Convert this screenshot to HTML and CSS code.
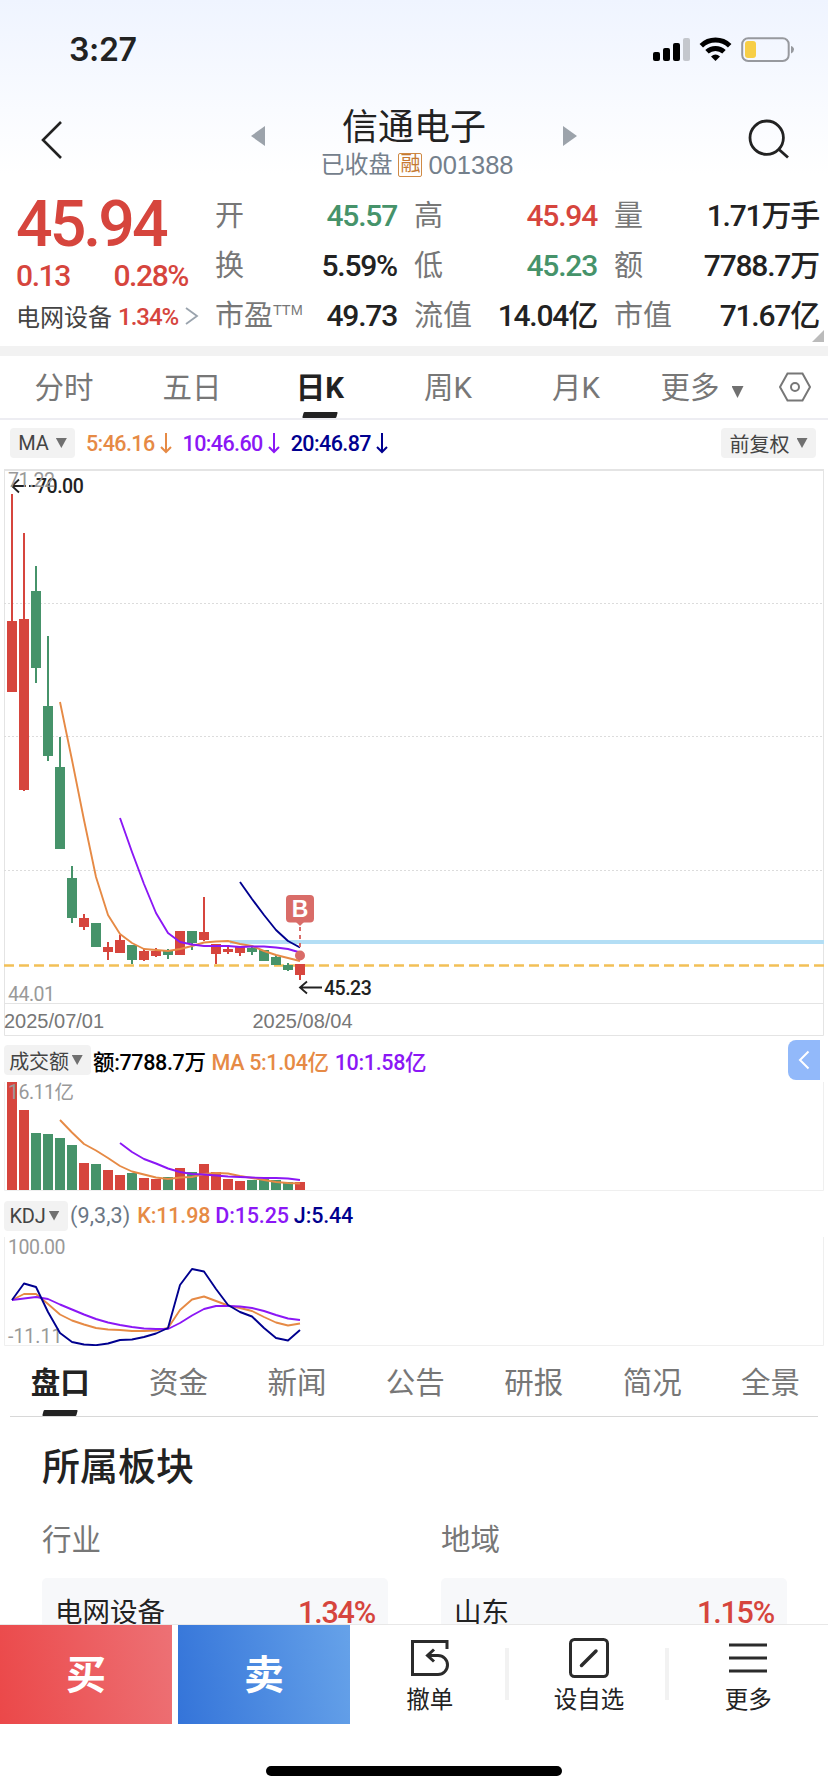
FILE: index.html
```html
<!DOCTYPE html>
<html lang="zh-CN">
<head>
    <meta charset="UTF-8">
    <meta name="viewport" content="width=device-width, initial-scale=1.0">
    <title>信通电子 001388</title>
    <link rel="stylesheet" href="styles.css">
</head>
<body>

<div class="page">
    <header class="top">
        <!-- Status bar -->
        <div class="status-bar">
            <span class="time">3:27</span>
            <svg class="status-icons" width="142" height="26" viewBox="0 0 142 26">
                <rect x="0" y="15" width="7" height="9" rx="2"/>
                <rect x="10" y="11" width="7" height="13" rx="2"/>
                <rect x="20" y="6" width="7" height="18" rx="2"/>
                <rect x="30" y="1" width="7" height="23" rx="2" fill="#c4c7cd"/>
                <g fill="none" stroke="#000" stroke-width="5">
                    <path d="M48.3 8.7 A20.5 20.5 0 0 1 76.7 8.7"/>
                    <path d="M54 14.8 A12.4 12.4 0 0 1 71 14.8"/>
                </g>
                <path d="M62.5 24 L58 19.6 Q62.500 15.600 67 19.600 Z"/>
                <rect x="89.200" y="1.200" width="46.500" height="22.800" rx="6" fill="none" stroke="#97999e" stroke-width="2"/>
                <rect x="92" y="4" width="11" height="17" rx="3" fill="#f7ce46"/>
                <path d="M138 9 Q141 10 141 12.500 Q141 15 138 16.500 Z" fill="#97999e"/>
            </svg>
        </div>

        <!-- Title -->
        <div class="nav">
            <svg class="back" width="22" height="40" viewBox="0 0 22 40"><path d="M20 2 L2 20 L20 38"/></svg>
            <span class="switch prev"></span>
            <div class="stock">
                <h1>信通电子</h1>
                <p><span>已收盘</span><i>融</i><span class="code">001388</span></p>
            </div>
            <span class="switch next"></span>
            <svg class="search" width="42" height="42" viewBox="0 0 42 42"><circle cx="18.700" cy="18.700" r="16.700"/><path d="M31 30.500 L40 38.500"/></svg>
        </div>
    </header>

    <!-- Quote -->
    <section class="quote">
        <div class="price">
            <div class="last">45.94</div>
            <div class="change"><span>0.13</span><span>0.28%</span></div>
            <div class="sector">电网设备<b>1.34%</b><svg width="14" height="20" viewBox="0 0 14 20"><path d="M1 2 L12 10 L1 18"/></svg></div>
        </div>
        <dl class="stats">
            <div><dt>开</dt><dd class="down">45.57</dd></div>
            <div><dt>高</dt><dd class="up">45.94</dd></div>
            <div><dt>量</dt><dd>1.71万手</dd></div>
            <div><dt>换</dt><dd>5.59%</dd></div>
            <div><dt>低</dt><dd class="down">45.23</dd></div>
            <div><dt>额</dt><dd>7788.7万</dd></div>
            <div><dt>市盈<sup>TTM</sup></dt><dd>49.73</dd></div>
            <div><dt>流值</dt><dd>14.04亿</dd></div>
            <div><dt>市值</dt><dd>71.67亿</dd></div>
        </dl>
        <span class="corner"></span>
    </section>

    <!-- Period tabs -->
    <nav class="periods">
        <a>分时</a>
        <a>五日</a>
        <a class="active">日K</a>
        <a>周K</a>
        <a>月K</a>
        <a class="more">更多<span class="caret"></span></a>
        <svg width="32" height="32" viewBox="0 0 32 32"><path d="M8.500 2.500 H23.500 L31 16 L23.500 29.500 H8.500 L1 16 Z"/><circle cx="16" cy="16" r="4"/></svg>
    </nav>

    <div class="ma-row">
        <span class="pill">MA<span class="caret"></span></span>
        <span class="ma5">5:46.16<svg class="arrow" viewBox="0 0 12 22"><path d="M6 1 V20 M1 15 L6 20 L11 15"/></svg></span>
        <span class="ma10">10:46.60<svg class="arrow" viewBox="0 0 12 22"><path d="M6 1 V20 M1 15 L6 20 L11 15"/></svg></span>
        <span class="ma20">20:46.87<svg class="arrow" viewBox="0 0 12 22"><path d="M6 1 V20 M1 15 L6 20 L11 15"/></svg></span>
        <span class="pill adjust">前复权<span class="caret"></span></span>
    </div>

    <!-- Candles -->
    <svg class="chart" width="828" height="568" viewBox="0 468 828 568">
        <g class="frame">
            <path d="M4 470 H824" stroke-width="2"/>
            <path d="M4.500 470 V1035.500 H823.500 V470 M4 1003.500 H824"/>
        </g>
        <path class="grid" d="M4 603.500 H824 M4 736.500 H824 M4 870.500 H824"/>
        <path d="M230 942 H824" stroke="#b3def5" stroke-width="4"/>
        <path d="M4 965.500 H824" stroke="#f2c057" stroke-width="2.500" stroke-dasharray="10 5"/>
        <g id="candles"></g>
        <g id="priceLines"></g>
        <g class="marker">
            <path class="marker-line" d="M300 927 V950"/>
            <path d="M296 922 H304 L300 926 Z"/>
            <rect x="286" y="895" width="28" height="27.500" rx="4"/>
            <circle cx="300" cy="955.500" r="5"/>
            <text x="300" y="917" text-anchor="middle">B</text>
        </g>
        <g class="pointer">
            <path d="M12 486 H26 M29 486 H36 M19 479.500 L12 486 L19 492.500"/>
            <path d="M300 987.500 H322 M307 981.500 L300 987.500 L307 993.500"/>
        </g>
        <text class="label dark" x="36" y="493">70.00</text>
        <text class="label" x="8" y="487">71.22</text>
        <text class="label dark" x="324" y="995">45.23</text>
        <text class="label" x="8" y="1001">44.01</text>
        <text class="date" x="4" y="1028">2025/07/01</text>
        <text class="date" x="252.500" y="1028">2025/08/04</text>
    </svg>

    <!-- Turnover -->
    <div class="ind-row volume-row">
        <span class="pill">成交额<span class="caret"></span></span>
        <span class="black">额:7788.7万</span>
        <span class="ma5">MA 5:1.04亿</span>
        <span class="ma10">10:1.58亿</span>
        <span class="drawer"><svg width="12" height="20" viewBox="0 0 12 20"><path d="M10.500 1.500 L2 10 L10.500 18.500"/></svg></span>
    </div>
    <svg class="chart" width="828" height="110" viewBox="0 1081 828 110">
        <path class="frame light" d="M4.500 1082 V1190.500 H823.500 V1082"/>
        <g id="volumes"></g>
        <g id="volumeLines"></g>
        <text class="label" x="8" y="1099">16.11亿</text>
    </svg>

    <!-- KDJ -->
    <div class="ind-row kdj-row">
        <span class="pill">KDJ<span class="caret"></span></span>
        <span class="params">(9,3,3)</span>
        <span class="ma5">K:11.98</span>
        <span class="ma10">D:15.25</span>
        <span class="ma20">J:5.44</span>
    </div>
    <svg class="chart" width="828" height="110" viewBox="0 1236 828 110">
        <path class="frame light" d="M4.500 1237 V1345.500 H823.500 V1237"/>
        <text class="label" x="8" y="1254">100.00</text>
        <text class="label low" x="8" y="1342.500">-11.11</text>
        <g id="kdjLines"></g>
    </svg>

    <!-- Detail tabs -->
    <nav class="details">
        <a class="active">盘口</a>
        <a>资金</a>
        <a>新闻</a>
        <a>公告</a>
        <a>研报</a>
        <a>简况</a>
        <a>全景</a>
    </nav>

    <section class="boards">
        <h2>所属板块</h2>
        <div class="board-grid">
            <div>
                <h3>行业</h3>
                <div class="card"><span>电网设备</span><b>1.34%</b></div>
            </div>
            <div>
                <h3>地域</h3>
                <div class="card"><span>山东</span><b>1.15%</b></div>
            </div>
        </div>
    </section>

    <!-- Trade bar -->
    <footer class="trade">
        <div class="trade-row">
            <button class="buy">买</button>
            <button class="sell">卖</button>
            <div class="action">
                <svg width="42" height="42" viewBox="0 0 42 42"><path d="M38 12 V4.500 H3.500 V37.500 H29 A9 9 0 0 0 29 18.500 H19 M25 12.500 L18.500 18.500 L25 24.500"/></svg>
                <span>撤单</span>
            </div>
            <div class="action">
                <svg width="42" height="42" viewBox="0 0 42 42"><rect x="2.500" y="2.500" width="37" height="37" rx="4"/><path class="pen" d="M13.500 28.500 L28 14"/></svg>
                <span>设自选</span>
            </div>
            <div class="action">
                <svg width="42" height="42" viewBox="0 0 42 42"><path d="M2 8 H40 M2 21 H40 M2 34 H40"/></svg>
                <span>更多</span>
            </div>
        </div>
        <div class="home"></div>
    </footer>
</div>

<script>
    const UP = '#d6453d';
    const DOWN = '#46936a';
    const ORANGE = '#e68a45';
    const PURPLE = '#8b17f5';
    const NAVY = '#00008f';

    // [up, wick top, body top, body bottom, wick bottom, volume top]
    const days = [
        [1, 494, 621, 692, 692, 1082],
        [1, 533, 619, 790, 791, 1110],
        [0, 566, 591, 668, 683, 1133],
        [0, 636, 706, 756, 761, 1134],
        [0, 737, 767, 849, 849, 1138],
        [0, 866, 878, 918, 923, 1145],
        [1, 914, 918, 927, 930, 1163],
        [0, 923, 923, 947, 947, 1164],
        [1, 942, 947, 952, 960, 1170],
        [1, 935, 940, 953, 953, 1175],
        [0, 945, 945, 960, 964, 1173],
        [1, 949, 951, 960, 961, 1178],
        [1, 948, 951, 956, 957, 1179],
        [0, 949, 951, 955, 959, 1177],
        [1, 931, 931, 955, 955, 1168],
        [0, 931, 931, 943, 950, 1172],
        [1, 897, 932, 940, 941, 1164],
        [1, 944, 944, 954, 964, 1172],
        [1, 945, 949, 952, 954, 1179],
        [1, 947, 947, 953, 956, 1181],
        [0, 946, 948, 952, 955, 1180],
        [0, 950, 950, 961, 961, 1179],
        [0, 955, 957, 965, 965, 1180],
        [0, 963, 965, 970, 971, 1182],
        [1, 964, 964, 975, 980, 1182]
    ];

    function rect(x, y, w, h, color) {
        return `<rect x="${x}" y="${y}" width="${w}" height="${h}" fill="${color}"/>`;
    }

    // Every series ends on the last day, start is the index of its first day
    function line(start, values, color) {
        const points = values.map((y, i) => `${12 + (start + i) * 12},${y}`).join(' ');
        return `<polyline points="${points}" fill="none" stroke="${color}" stroke-width="1.9" stroke-linejoin="round"/>`;
    }

    let candles = '';
    let volumes = '';
    days.forEach(([up, high, top, bottom, low, vol], i) => {
        const color = up ? UP : DOWN;
        const x = 12 + i * 12;
        candles += rect(x - 1, high, 2, low - high, color) + rect(x - 5, top, 10, bottom - top, color);
        volumes += rect(x - 5, vol, 10, 1190 - vol, color);
    });
    document.getElementById('candles').innerHTML = candles;
    document.getElementById('volumes').innerHTML = volumes;

    document.getElementById('priceLines').innerHTML =
        line(4, [702, 760, 820, 877, 915, 934, 943, 949, 950, 951, 949, 946, 942.5, 941.5, 941, 944, 946, 951, 955, 958, 961], ORANGE) +
        line(9, [818, 852, 884, 913, 933, 942, 944.5, 946, 946, 946, 947, 946.5, 946.5, 947.5, 949, 952.5], PURPLE) +
        line(19, [882, 899, 915, 930, 941, 947.5], NAVY);

    document.getElementById('volumeLines').innerHTML =
        line(4, [1120, 1132.5, 1144, 1150.5, 1158, 1166, 1171.5, 1174.5, 1177.5, 1179, 1177.5, 1177, 1174, 1173, 1173.5, 1176, 1178, 1180, 1182, 1183, 1183.5], ORANGE) +
        line(9, [1143, 1152, 1159, 1163.5, 1168.5, 1172, 1174, 1174.5, 1175.5, 1176.5, 1177, 1177.5, 1178, 1178, 1178.5, 1180], PURPLE);

    document.getElementById('kdjLines').innerHTML =
        line(0, [1300, 1294, 1294, 1304, 1314.5, 1320.5, 1324.5, 1328, 1329.5, 1330, 1331, 1331, 1330.5, 1328, 1310, 1299.5, 1296.5, 1301, 1305.5, 1308, 1311, 1317, 1322.5, 1325.5, 1323.5], ORANGE) +
        line(0, [1300, 1298.5, 1297, 1299, 1304.5, 1309.5, 1314.5, 1319, 1322.5, 1325, 1327, 1328.5, 1329, 1329, 1323, 1315.5, 1309, 1306, 1306, 1306.5, 1308, 1311, 1315, 1318.5, 1320], PURPLE) +
        line(0, [1300, 1283.5, 1287, 1312, 1333, 1342, 1344.5, 1345.2, 1343.5, 1340, 1339.5, 1337, 1333.5, 1328, 1285, 1269, 1271.5, 1289, 1305, 1312, 1316.5, 1328, 1338, 1340.5, 1330], NAVY);
</script>

</body>
</html>
```
FILE: styles.css
```css
* {
    box-sizing: border-box;
}

body {
    margin: 0;
    background: #fff;
    color: #222;
    font-family: Roboto, "Noto Sans CJK SC", sans-serif;
}

h1, h2, h3, p, dl, dd {
    margin: 0;
    font-weight: 400;
}

svg {
    display: block;
    flex: none;
}

.page {
    display: flex;
    flex-direction: column;
    width: 828px;
    height: 1792px;
    overflow: hidden;
}

.page > * {
    flex: none;
}

.top {
    height: 190px;
    background: linear-gradient(#eff4ff, #fff 92%);
}

.status-bar {
    display: flex;
    justify-content: space-between;
    align-items: center;
    height: 100px;
    padding: 0 33px 0 69px;
}

.time {
    font: 600 32px/40px Inter, sans-serif;
    letter-spacing: -0.3px;
}

.nav {
    display: flex;
    height: 90px;
    padding: 0 38px 0 41px;
}

.back {
    margin-top: 20px;
    fill: none;
    stroke: #222;
    stroke-width: 2.6;
}

.switch {
    width: 14px;
    height: 20px;
    margin-top: 26px;
    background: #9ca3ab;
}

.prev {
    margin-left: 188px;
    clip-path: polygon(0 50%, 100% 0, 100% 100%);
}

.next {
    clip-path: polygon(0 0, 100% 50%, 0 100%);
}

.stock {
    width: 298px;
    text-align: center;
}

.stock h1 {
    padding-top: 7px;
    font-size: 36px;
    line-height: 42px;
}

.stock p {
    display: flex;
    justify-content: center;
    align-items: center;
    height: 32px;
    padding-left: 6px;
    color: #74808c;
    font-size: 24px;
    line-height: 32px;
}

.stock i {
    width: 24px;
    height: 24px;
    margin: 0 6px;
    border: 1.5px solid #d08a45;
    border-radius: 2px;
    color: #c57a32;
    font-size: 20px;
    font-style: normal;
    line-height: 21px;
}

.code {
    font-family: "Liberation Sans", Arial, sans-serif;
    font-size: 25.5px;
}

.search {
    margin-top: 19px;
    margin-left: auto;
    fill: none;
    stroke: #222;
    stroke-width: 2.8;
}

.quote {
    position: relative;
    display: flex;
    height: 166px;
    border-bottom: 10px solid #f2f2f2;
}

.price {
    width: 215px;
    padding-left: 16px;
    color: #d6453d;
    font-weight: 500;
}

.last {
    height: 64px;
    font-size: 64.5px;
    line-height: 68px;
    letter-spacing: -3px;
}

.change {
    display: flex;
    justify-content: space-between;
    width: 172px;
    font-size: 30px;
    line-height: 44px;
    letter-spacing: -1.4px;
}

.sector {
    display: flex;
    align-items: center;
    height: 35px;
    color: #444;
    font-size: 24px;
    font-weight: 400;
    white-space: nowrap;
}

.sector b {
    margin: 2px 7px 0 6px;
    color: #d6453d;
    font-weight: 500;
    letter-spacing: -1px;
}

.sector svg {
    fill: none;
    stroke: #9aa3ad;
    stroke-width: 1.8;
}

.stats {
    display: grid;
    grid-template-columns: 182px 183px 205px;
    grid-template-rows: repeat(3, 50px);
    column-gap: 17px;
}

.stats > div {
    display: flex;
    justify-content: space-between;
    align-items: center;
    height: 52px;
    white-space: nowrap;
}

.stats dt {
    color: #777;
    font-size: 29px;
    line-height: 50px;
}

.stats sup {
    position: relative;
    top: -11px;
    font: 14.5px/1 "Liberation Sans", sans-serif;
    vertical-align: baseline;
}

.stats dd {
    font-size: 30px;
    font-weight: 500;
    line-height: 50px;
    letter-spacing: -1.2px;
}

.up {
    color: #d6453d;
}

.down {
    color: #46936a;
}

.corner {
    position: absolute;
    right: 4px;
    bottom: 4px;
    width: 12px;
    height: 12px;
    background: #bbb;
    clip-path: polygon(100% 0, 100% 100%, 0 100%);
}

.periods {
    display: grid;
    grid-template-columns: 128px 128px 128px 128px 128px 139px 32px;
    align-items: center;
    height: 64px;
    border-bottom: 2px solid #ededf2;
    color: #777;
    font-size: 29.5px;
    text-align: center;
}

.periods a,
.details a {
    position: relative;
    height: 62px;
    line-height: 65px;
}

.periods .active,
.details .active {
    color: #222;
    font-weight: 700;
}

.periods .active::after,
.details .active::after {
    content: "";
    position: absolute;
    bottom: 0;
    left: 50%;
    width: 34px;
    height: 6px;
    margin-left: -17px;
    border-radius: 1px;
    background: #222;
    transform: skewX(-15deg);
}

.periods svg {
    fill: none;
    stroke: #777;
    stroke-width: 2;
}

.caret {
    display: inline-block;
    width: 11px;
    height: 10px;
    background: #707070;
    clip-path: polygon(0 0, 100% 0, 50% 100%);
}

.periods .more {
    padding-right: 15px;
}

.more .caret {
    width: 12px;
    height: 12px;
    margin-left: 12px;
}

.ma-row,
.ind-row {
    position: relative;
    display: flex;
    align-items: center;
    font-size: 21.5px;
    font-weight: 500;
    white-space: nowrap;
}

.ma-row {
    height: 48px;
    padding: 0 12px 2px 10px;
}

.ma-row > span {
    display: flex;
    align-items: center;
    margin-right: 11px;
    letter-spacing: -0.6px;
}

.pill {
    display: flex;
    align-items: center;
    justify-content: center;
    height: 30px;
    border-radius: 4px;
    background: #f2f2f2;
    color: #444;
    font-size: 20px;
    font-weight: 400;
}

.ma-row .pill {
    width: 65px;
    gap: 7px;
    letter-spacing: 0;
}

.ma-row .adjust {
    width: 95px;
    margin: 0 0 0 auto;
}

.arrow {
    width: 12px;
    height: 22px;
    margin-left: 5px;
    fill: none;
    stroke: currentColor;
    stroke-width: 2;
}

.ma5 {
    color: #e68a45;
}

.ma10 {
    color: #8b17f5;
}

.ma20 {
    color: #00008f;
}

.black {
    color: #000;
}

.params {
    color: #6b7785;
    font-weight: 400;
}

.frame {
    fill: none;
    stroke: #e4e4e4;
}

.light {
    stroke: #efefef;
}

.grid {
    stroke: #dcdcdc;
    stroke-dasharray: 2 2;
}

.marker {
    fill: #d96c68;
}

.marker-line {
    stroke: #d96c68;
    stroke-width: 2;
    stroke-dasharray: 4 4;
}

.marker text {
    fill: #fff;
    font: 700 23px "Liberation Sans", Arial, sans-serif;
}

.pointer {
    fill: none;
    stroke: #222;
    stroke-width: 1.8;
}

.label {
    fill: #999;
    font-size: 19.5px;
    letter-spacing: -0.5px;
}

.dark {
    fill: #222;
    font-weight: 500;
}

.low {
    letter-spacing: 0;
}

.date {
    fill: #777;
    font: 20px "Liberation Sans", Arial, sans-serif;
}

.ind-row {
    height: 45px;
    padding: 5px 0 0 4px;
}

.volume-row {
    padding-top: 3px;
}

.kdj-row {
    padding-top: 4px;
}

.ind-row > span {
    margin-right: 6px;
    letter-spacing: -0.35px;
}

.kdj-row > span {
    margin-right: 5px;
    letter-spacing: -0.15px;
}

.kdj-row .params {
    margin-right: 7px;
    letter-spacing: 0.1px;
}

.ind-row .pill {
    width: 87px;
    margin-right: 2px;
    padding-right: 3px;
    gap: 3px;
    letter-spacing: -0.2px;
}

.kdj-row .pill {
    width: 64px;
}

.ind-row .drawer {
    position: absolute;
    top: 4px;
    right: 8px;
    display: flex;
    align-items: center;
    justify-content: center;
    width: 32px;
    height: 40px;
    margin: 0;
    border-radius: 8px 0 0 8px;
    background: #92b9fa;
}

.drawer svg {
    fill: none;
    stroke: #fff;
    stroke-width: 2;
}

.details {
    display: flex;
    height: 71px;
    margin: 0 10px;
    padding-top: 8px;
    border-bottom: 1px solid #d8d8d8;
    color: #777;
    font-size: 29.5px;
    text-align: center;
}

.details a {
    flex: 0 0 118.4px;
    left: -9px;
    line-height: 58px;
}

.boards {
    height: 207px;
    padding: 23px 42px 0;
    overflow: hidden;
}

.boards h2 {
    font-size: 38px;
    font-weight: 500;
    line-height: 54px;
}

.board-grid {
    display: grid;
    grid-template-columns: 346px 346px;
    column-gap: 53px;
    padding-top: 25px;
}

.boards h3 {
    color: #777;
    font-size: 29.5px;
    line-height: 42px;
}

.card {
    display: flex;
    justify-content: space-between;
    height: 80px;
    margin-top: 17px;
    padding: 0 13px;
    border-radius: 5px;
    background: #f7f8fa;
    font-size: 27.5px;
    line-height: 70px;
}

.card b {
    color: #d6453d;
    font-size: 30.5px;
    font-weight: 500;
    letter-spacing: -1.2px;
}

.trade {
    height: 168px;
    border-top: 1px solid #e8e8e8;
    background: #fff;
}

.trade-row {
    display: flex;
    height: 99px;
}

.trade button {
    width: 172px;
    margin: 0 6px 0 0;
    padding: 0 0 5px;
    border: none;
    color: #fff;
    font-family: inherit;
    font-size: 40px;
    font-weight: 700;
}

.buy {
    background: linear-gradient(80deg, #eb4849, #ed7175);
}

.trade .sell {
    margin-right: 0;
    background: linear-gradient(80deg, #3474d9, #66a2e9);
}

.action {
    position: relative;
    display: flex;
    flex: 1;
    flex-direction: column;
    align-items: center;
    padding-top: 12px;
    font-size: 23.5px;
    line-height: 42px;
}

.action + .action::before {
    content: "";
    position: absolute;
    top: 23px;
    left: -4px;
    width: 4px;
    height: 52px;
    background: #f2f2f2;
}

.action svg {
    fill: none;
    stroke: #2b2b2b;
    stroke-width: 3;
}

.action .pen {
    stroke-width: 3.5;
    stroke-linecap: round;
}

.home {
    width: 296px;
    height: 10px;
    margin: 42px auto 0;
    border-radius: 5px;
    background: #000;
}
```
